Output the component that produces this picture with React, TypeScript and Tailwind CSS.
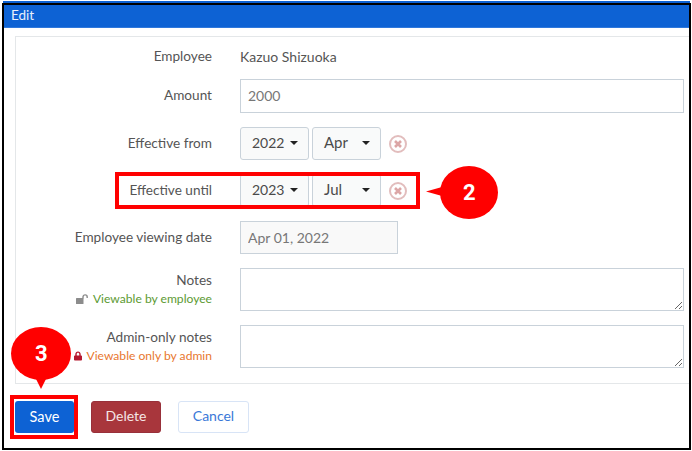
import { FaLock } from 'react-icons/fa';

const FONT = 'font-[Lato,"Open_Sans",sans-serif]';

function Caret() {
  return <span className="w-0 h-0 border-x-[4px] border-x-transparent border-t-[4px] border-t-[#222]" />;
}

function DropDown({ label, size, gap }: { label: string; size: string; gap: string }) {
  return (
    <div className={`w-[69px] ${gap} h-full flex items-center justify-between pl-[11px] pr-[10px] pb-[2px] bg-[#f9fafa] border border-[#c9d2da] rounded-[3px] ${size} text-[#4a4a4a]`}>
      <span>{label}</span>
      <Caret />
    </div>
  );
}

function RemoveIcon() {
  return (
    <svg width="20" height="20" viewBox="0 0 20 20" className="ml-[7px]">
      <circle cx="10" cy="10" r="8" fill="none" stroke="#e2bdbd" strokeWidth="2" />
      <path d="M7 7l6 6M13 7l-6 6" stroke="#dca6a6" strokeWidth="2.6" />
    </svg>
  );
}

function UnlockIcon() {
  return (
    <svg width="12" height="10" viewBox="0 0 12 10" className="block">
      <rect x="0" y="4" width="7.5" height="6" rx="0.5" fill="#8c8c8c" />
      <path d="M7 4.5V3a2.1 2.1 0 0 1 4.2 0v1" fill="none" stroke="#8c8c8c" strokeWidth="1.4" />
    </svg>
  );
}

function Row({ label, className, children }: { label: React.ReactNode; className: string; children: React.ReactNode }) {
  return (
    <div className={`flex ${className}`}>
      <div className="w-[196px] shrink-0 pb-px flex flex-col justify-center items-end text-[13.6px] text-[#555]">{label}</div>
      <div className="ml-[28px] flex items-center h-full">{children}</div>
    </div>
  );
}

function DateRow({ label, year, month }: { label: string; year: string; month: string }) {
  return (
    <Row label={label} className="mt-[14px] h-[33px]">
      <DropDown label={year} size="text-[14px]" gap="mr-[3px]" />
      <DropDown label={month} size="text-[15px]" gap="" />
      <RemoveIcon />
    </Row>
  );
}

function NoteLabel({ title, note, tone, gap, icon }: { title: string; note: string; tone: string; gap: string; icon: React.ReactNode }) {
  return (
    <>
      <span className="mt-px leading-[18px]">{title}</span>
      <span className={`flex items-center ${gap} mt-px text-[12.1px] leading-[18px] ${tone}`}>
        {icon}
        {note}
      </span>
    </>
  );
}

function Callout({ className, tail, digit, digitClass }: { className: string; tail: React.ReactNode; digit: string; digitClass: string }) {
  return (
    <div className={`absolute ${className}`}>
      {tail}
      <span className={`absolute font-['Roboto',sans-serif] font-bold text-white text-[22px] leading-none ${digitClass}`}>{digit}</span>
    </div>
  );
}

export default function App() {
  return (
    <div className={`relative w-[692px] h-[451px] bg-white overflow-hidden pt-px ${FONT}`}>
      <div className="ml-[3px] mr-[2px] h-[2px] bg-[#0d62d4]" />
      <div className="ml-[2px] w-[689px] h-[447px] border-2 border-black bg-white">
        <div className="h-[23px] bg-[#0d62d4] border-b border-[#2f78dc] pl-[7px] text-[13.5px] leading-[21px] text-[#e8f0fb]">Edit</div>

        <div className="ml-[11px] mt-[8px] h-[348px] border border-r-0 border-[#e4e7e9]">
          <Row label="Employee" className="h-[40px]">
            <span className="pb-[2px] text-[14px] text-[#555]">Kazuo Shizuoka</span>
          </Row>
          <Row label="Amount" className="mt-[2px] h-[34px]">
            <input readOnly value="2000" className="w-[444px] h-full px-[7px] pb-[2px] border border-[#c9d2da] bg-white text-[14px] text-[#777] outline-none" />
          </Row>
          <DateRow label="Effective from" year="2022" month="Apr" />
          <DateRow label="Effective until" year="2023" month="Jul" />
          <Row label="Employee viewing date" className="mt-[14px] h-[33px]">
            <input readOnly value="Apr 01, 2022" className="w-[158px] h-full px-[7px] border border-[#c9d2da] bg-[#f9f9f9] text-[14px] text-[#777] outline-none" />
          </Row>
          <Row
            label={<NoteLabel title="Notes" note="Viewable by employee" tone="text-[#5c9a32]" gap="gap-[5px]" icon={<UnlockIcon />} />}
            className="mt-[14px] h-[43px]"
          >
            <textarea readOnly className="w-[444px] h-full border border-[#c9d2da] bg-white outline-none" />
          </Row>
          <Row
            label={<NoteLabel title="Admin-only notes" note="Viewable only by admin" tone="text-[#e8772e]" gap="gap-[5px]" icon={<FaLock className="w-[8px] h-[10px] text-[#b5182f]" />} />}
            className="mt-[14px] h-[43px]"
          >
            <textarea readOnly className="w-[444px] h-full border border-[#c9d2da] bg-white outline-none" />
          </Row>
        </div>

        <div className="ml-[11px] mt-[17px] flex gap-[17px] text-[14px]">
          <button className="w-[59px] h-[32px] rounded-[3px] bg-[#0d62d4] text-[14.5px] text-white">Save</button>
          <button className="w-[70px] h-[32px] pb-[4px] rounded-[3px] bg-[#a8363c] border border-[#98303a] text-[#f5e6e6]">Delete</button>
          <button className="w-[71px] h-[32px] pb-[4px] rounded-[3px] bg-white border border-[#d8e4f6] text-[#3a78d8]">Cancel</button>
        </div>
      </div>

      {/* annotations on top of the screenshot */}
      <div className="absolute left-[115px] top-[172px] w-[305px] h-[37px] border-4 border-[#ff0000]" />
      <div className="absolute left-[10px] top-[395px] w-[68px] h-[44px] border-4 border-[#ff0000]" />

      <Callout
        className="left-[426px] top-[166px] w-[72px] h-[53px]"
        tail={
          <svg width="72" height="53" viewBox="0 0 72 53" className="block">
            <path d="M0 25.5L16 21V30z" fill="#ff0000" />
            <ellipse cx="43" cy="26.5" rx="29" ry="26.5" fill="#ff0000" />
          </svg>
        }
        digit="2"
        digitClass="left-[37px] top-[16px]"
      />
      <Callout
        className="left-[11px] top-[327px] w-[60px] h-[63px]"
        tail={
          <svg width="60" height="63" viewBox="0 0 60 63" className="block">
            <path d="M24 50L30 62L36 50z" fill="#ff0000" />
            <ellipse cx="30" cy="26.5" rx="30" ry="26.5" fill="#ff0000" />
          </svg>
        }
        digit="3"
        digitClass="left-[24px] top-[16px]"
      />
    </div>
  );
}
